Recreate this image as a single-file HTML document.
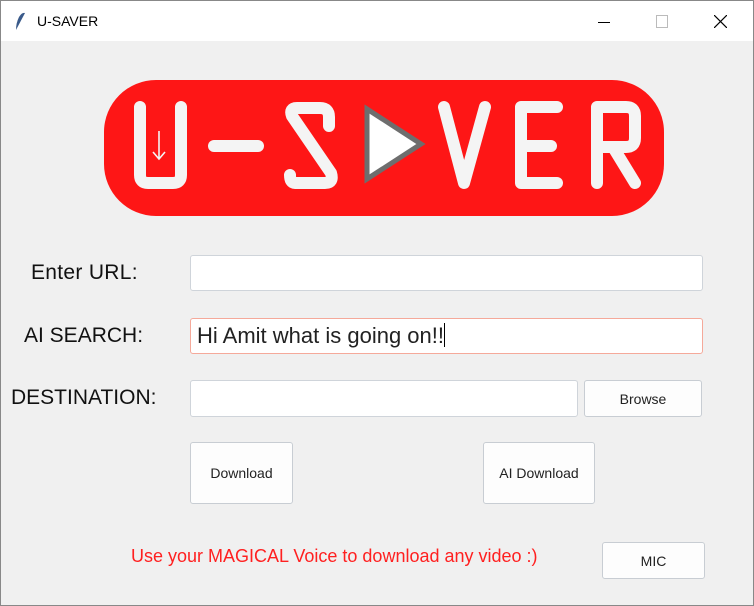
<!DOCTYPE html>
<html><head><style>
body{margin:0;width:754px;height:606px;overflow:hidden;font-family:"Liberation Sans",sans-serif;background:#fff}
.win{position:absolute;left:0;top:0;width:752px;height:604px;border:1px solid #888;background:#f0f0f0}
.title{position:absolute;left:0;top:0;width:752px;height:40px;background:#fff}
.a{position:absolute}
.lbl{position:absolute;font-size:21px;color:#111;white-space:nowrap}
.inp{position:absolute;background:#fff;border:1px solid #cfd4da;border-radius:3px;box-sizing:border-box}
.btn{position:absolute;background:#fdfdfd;border:1px solid #c8cdd3;border-radius:3px;box-sizing:border-box;font-size:14px;color:#222;display:flex;align-items:center;justify-content:center}
</style></head><body>
<div class="win">
<div class="title">
<svg class="a" style="left:12px;top:10px" width="14" height="20" viewBox="0 0 14 20"><path d="M3 19 L12 2 Q9 1 6 6 Q3 12 3 19Z" fill="#3a5a8a"/></svg>
<div class="a" style="left:36px;top:12px;font-size:14px;color:#000">U-SAVER</div>
<div class="a" style="left:597px;top:21px;width:12px;height:1px;background:#000"></div>
<div class="a" style="left:655px;top:14px;width:10px;height:11px;border:1px solid #bbb"></div>
<svg class="a" style="left:713px;top:14px" width="13" height="13"><path d="M0 0L13 13M13 0L0 13" stroke="#000" stroke-width="1.2"/></svg>
</div>
<svg class="a" style="left:102px;top:78px" width="562" height="138" viewBox="102 78 562 138">
<rect x="103" y="79" width="560" height="136" rx="52" fill="#fe1616"/>
<g stroke="#f4f4f4" stroke-width="12" fill="none" stroke-linecap="round" stroke-linejoin="round">
<path d="M139 106 V174 Q139 182 147 182 H172 Q180 182 180 174 V106"/>
<path d="M213 145 H257"/>
<path d="M328 125 V116 Q328 107 319 107 H296 Q288 107 291 115 L330 172 Q333 182 324 182 H294 Q289 182 289 174"/>
<path d="M443 106 L463 182 L484 106"/>
<path d="M556 106 H520 V182 H556 M520 145 H550"/>
<path d="M596 182 V106 H625 Q634 106 634 115 V137 Q634 146 625 146 H598 M612 146 L634 182"/>
</g>
<path d="M158 130 V157 M152 151 L158 158 L164 151" stroke="#f4f4f4" stroke-width="1.6" fill="none"/>
<path d="M366 108 L420 143 L366 178 Z" fill="#fff" stroke="#6e6e6e" stroke-width="5" stroke-linejoin="miter"/>
</svg>
<div class="lbl" style="left:30px;top:260px;letter-spacing:0.3px">Enter URL:</div>
<div class="lbl" style="left:23px;top:323px">AI SEARCH:</div>
<div class="lbl" style="left:10px;top:385px">DESTINATION:</div>
<div class="inp" style="left:189px;top:254px;width:513px;height:36px"></div>
<div class="inp" style="left:189px;top:317px;width:513px;height:36px;border-color:#f5a99a;font-size:22px;padding:4px 0 0 6px;color:#222;white-space:nowrap">Hi Amit what is going on!!<span style="display:inline-block;width:1px;height:24px;background:#000;vertical-align:-4px"></span></div>
<div class="inp" style="left:189px;top:379px;width:388px;height:37px"></div>
<div class="btn" style="left:583px;top:379px;width:118px;height:37px">Browse</div>
<div class="btn" style="left:189px;top:441px;width:103px;height:62px">Download</div>
<div class="btn" style="left:482px;top:441px;width:112px;height:62px">AI Download</div>
<div class="a" style="left:130px;top:545px;font-size:18px;color:#ff2020;white-space:nowrap">Use your MAGICAL Voice to download any video :)</div>
<div class="btn" style="left:601px;top:541px;width:103px;height:37px">MIC</div>
</div>
</body></html>
